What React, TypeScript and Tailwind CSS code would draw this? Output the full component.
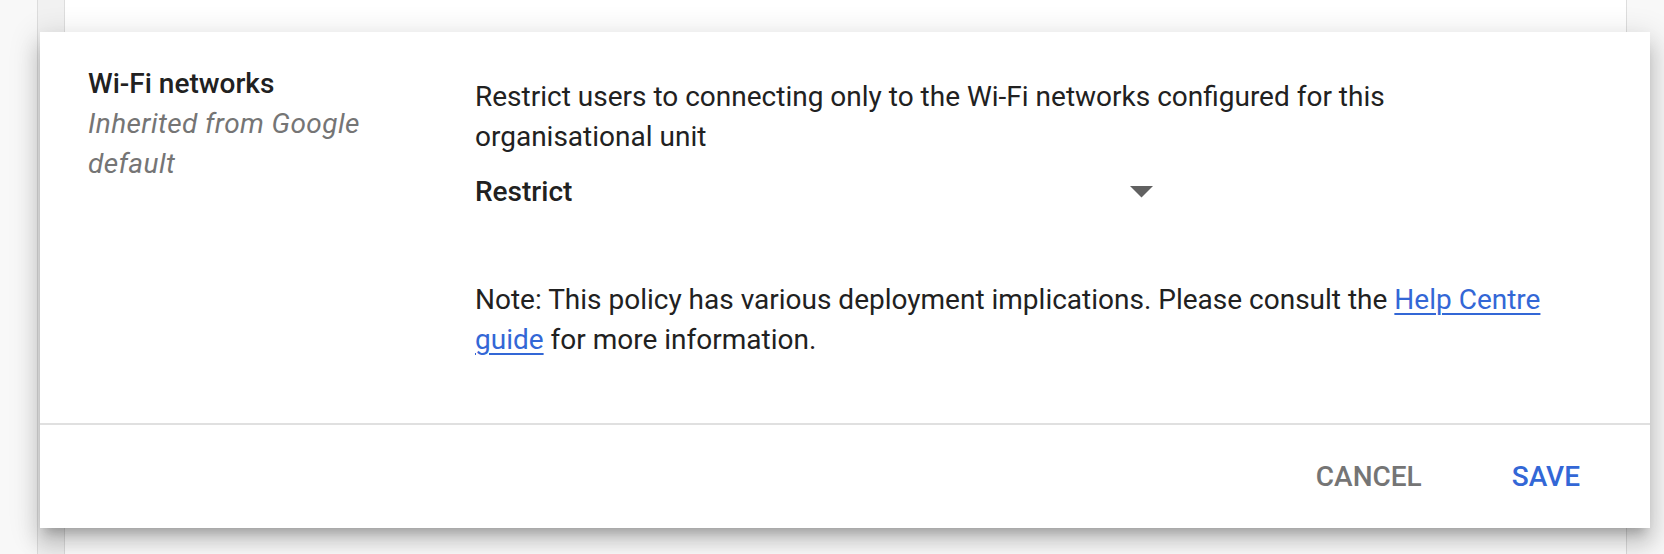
import React from "react";

export default function App() {
  return (
    <div
      className="relative w-[1664px] h-[554px] overflow-hidden bg-[#f8f8f8]"
      style={{ fontFamily: "Roboto, 'Liberation Sans', sans-serif" }}
    >
      {/* underlying list */}
      <div className="flex h-full">
        <div className="w-[37px] bg-[#f8f8f8]" />
        <div className="w-[27px] border-l border-[#dcdcdc] bg-[#f1f1f1]" />
        <div className="w-[1563px] border-l border-r border-[#dddddd] bg-white" />
        <div className="flex-1 bg-[#f8f8f8]" />
      </div>

      {/* expanded setting card */}
      <div className="absolute left-[40px] top-[32px] w-[1610px] h-[496px] bg-white flex flex-col shadow-[0_16px_20px_2px_rgba(0,0,0,0.14),0_6px_28px_4px_rgba(0,0,0,0.12),0_10px_10px_-6px_rgba(0,0,0,0.2)]">
        <div className="h-[391px] flex items-start pt-[32px] pl-[48px]">
          <div className="w-[387px] pr-[60px] text-[28px] leading-[40px]">
            <div className="font-medium text-[#212121]">Wi-Fi networks</div>
            <div className="italic tracking-[0.4px] text-[#757575]">Inherited from Google default</div>
          </div>
          <div className="mt-[13px] w-[1090px] text-[28px] leading-[40px] text-[#212121]">
            <div>
              Restrict users to connecting only to the Wi-Fi networks configured for this organisational unit
            </div>
            <div className="mt-[15px] w-[678px] flex items-center justify-between">
              <span className="font-medium">Restrict</span>
              <svg width="23" height="12" viewBox="0 0 23 12" className="block">
                <path d="M0 0 L23 0 L11.5 11.5 Z" fill="#616161" />
              </svg>
            </div>
            <div className="mt-[68px]">
              Note: This policy has various deployment implications. Please consult the{" "}
              <a className="text-[#3367d6] underline underline-offset-[4px] decoration-[2px]" href="#">
                Help Centre guide
              </a>{" "}
              for more information.
            </div>
          </div>
        </div>
        <div className="border-t-2 border-[#e0e0e0]" />
        <div className="h-[103px] flex items-center justify-end gap-[90px] pr-[70px] text-[28px] leading-[40px] font-medium">
          <span className="text-[#757575]">CANCEL</span>
          <span className="text-[#3367d6]">SAVE</span>
        </div>
      </div>
    </div>
  );
}
